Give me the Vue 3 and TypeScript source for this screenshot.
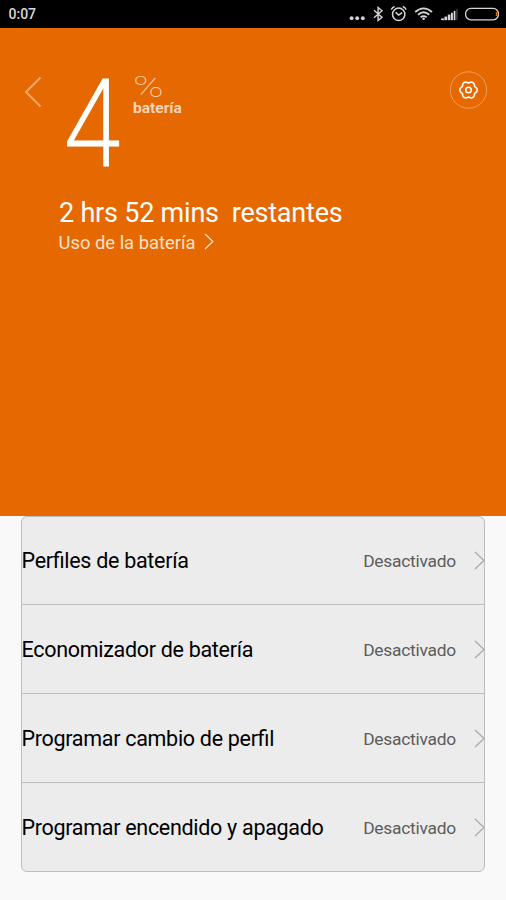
<script setup lang="ts">
interface Setting {
  label: string
  value: string
}

const settings: Setting[] = [
  { label: 'Perfiles de batería', value: 'Desactivado' },
  { label: 'Economizador de batería', value: 'Desactivado' },
  { label: 'Programar cambio de perfil', value: 'Desactivado' },
  { label: 'Programar encendido y apagado', value: 'Desactivado' },
]

// Outline of the six-lobed settings gear, centred on the origin.
const gearPoints: string = Array.from({ length: 72 }, (_, i) => {
  const a = (i * Math.PI) / 36
  const r = 8 + 0.75 * Math.cos(6 * a) - 0.15 * Math.cos(12 * a)
  return `${(r * Math.cos(a)).toFixed(2)},${(r * Math.sin(a)).toFixed(2)}`
}).join(' ')
</script>

<template>
  <div class="screen">
    <header class="status">
      <span class="clock">0:07</span>
      <svg class="status-icons" width="166" height="28" viewBox="340 0 166 28" fill="none" stroke="#d6d6d6">
        <g fill="#d6d6d6" stroke="none">
          <circle cx="351.6" cy="18.2" r="1.9" />
          <circle cx="357.2" cy="18.2" r="1.9" />
          <circle cx="362.8" cy="18.2" r="1.9" />
        </g>
        <path d="M374 10.2 L382 17.3 L378.1 20.6 V7.4 L382 10.7 L374 17.8" stroke-width="1.4" />
        <circle cx="398.7" cy="14.3" r="6.2" stroke-width="1.5" />
        <path d="M395.6 12.4 L398.7 15.1 L402.1 12.6 M391.3 9.6 Q392.2 7.4 394.6 6.5 M406.1 9.6 Q405.2 7.4 402.8 6.5" stroke-width="1.5" />
        <g stroke-width="1.8">
          <path d="M415.2 12 Q423.6 4.8 432 12" />
          <path d="M418 14.7 Q423.6 9.9 429.2 14.7" />
          <path d="M420.6 17.2 Q423.6 14.9 426.6 17.2" />
        </g>
        <circle cx="423.6" cy="18.8" r="1.3" fill="#d6d6d6" stroke="none" />
        <g fill="#d6d6d6" stroke="none">
          <rect x="441.2" y="18.4" width="2.7" height="1.8" />
          <rect x="444.4" y="16.6" width="2.7" height="3.6" />
          <rect x="447.8" y="14.6" width="2.6" height="5.6" />
          <rect x="451" y="12.8" width="1.9" height="7.4" />
          <rect x="453.7" y="10.8" width="1.7" height="9.4" />
          <rect x="456.2" y="9" width="1.4" height="11" fill="#444" />
        </g>
        <rect x="465.6" y="8.4" width="32.8" height="11.4" rx="5.2" stroke-width="1.3" />
        <rect x="495.8" y="12" width="1.3" height="4" fill="#e66800" stroke="none" />
      </svg>
    </header>

    <section class="hero">
      <div class="hero-top">
        <svg class="back" width="18" height="32" viewBox="0 0 18 32" fill="none">
          <path d="M16.5 1.5 L2 16 L16.5 30.5" stroke="#f2a46b" stroke-width="2" />
        </svg>
        <span class="level">4</span>
        <div class="unit">
          <span class="percent">%</span>
          <span class="unit-label">batería</span>
        </div>
        <svg class="gear" width="38" height="38" viewBox="-18.5 -19 38 38" fill="none">
          <circle r="18.2" stroke="#f3aa74" stroke-width="0.8" />
          <polygon :points="gearPoints" stroke="#fff" stroke-width="1.6" stroke-linejoin="round" />
          <circle r="2.8" stroke="#fff" stroke-width="1.5" />
        </svg>
      </div>
      <p class="remaining">2 hrs 52 mins&nbsp; restantes</p>
      <p class="usage">
        <span>Uso de la batería</span>
        <svg width="10" height="17" viewBox="0 0 10 17" fill="none">
          <path d="M1 1 L8.8 8.5 L1 16" stroke="#fbe0cc" stroke-width="1.3" />
        </svg>
      </p>
    </section>

    <main class="card">
      <div v-for="item in settings" :key="item.label" class="row">
        <span class="label">{{ item.label }}</span>
        <span class="value">{{ item.value }}</span>
        <svg class="chevron" width="11" height="19" viewBox="0 0 11 19" fill="none">
          <path d="M1 1 L10 9.5 L1 18" stroke="#a8a8a8" stroke-width="1.2" />
        </svg>
      </div>
    </main>
  </div>
</template>

<style>
body {
  background: #f9f9f9;
}
</style>

<style scoped>
.screen {
  width: 506px;
  height: 900px;
  overflow: hidden;
  background: #f9f9f9;
  font-family: Roboto, sans-serif;
}
.status {
  display: flex;
  justify-content: space-between;
  height: 28px;
  background: #000;
}
.clock {
  padding-left: 8.5px;
  color: #d8d8d8;
  font-size: 14px;
  font-weight: 500;
  line-height: 29px;
}
.hero {
  box-sizing: border-box;
  height: 487.5px;
  padding-top: 43px;
  background: #e66800;
  color: #fff;
}
.hero-top {
  display: flex;
  align-items: flex-start;
  height: 126px;
  padding: 0 18px 0 24px;
}
.back {
  margin-top: 5px;
}
.level {
  width: 73px;
  margin-left: 18px;
  font-family: Inter, sans-serif;
  font-size: 120px;
  font-weight: 200;
  line-height: 104px;
  transform: scaleX(0.9);
  transform-origin: left;
  -webkit-text-stroke: 0.8px #fff;
}
.unit {
  display: flex;
  flex-direction: column;
}
.percent {
  color: #f9d0b0;
  font-size: 30px;
  font-weight: 250;
  line-height: 31px;
  transform: scaleX(1.37);
  transform-origin: left;
}
.unit-label {
  margin-top: -3px;
  color: #f9d5b9;
  font-size: 15.5px;
  font-weight: 700;
  line-height: 18px;
}
.gear {
  margin-left: auto;
}
.remaining {
  margin: 0 0 0 59px;
  font-size: 27px;
  letter-spacing: -0.22px;
  line-height: 32px;
}
.usage {
  display: flex;
  align-items: center;
  gap: 8px;
  margin: 0 0 0 58.5px;
  color: #fbe0cc;
  font-size: 18.4px;
  line-height: 28px;
}
.usage svg {
  margin-top: -3px;
}
.card {
  box-sizing: border-box;
  width: 464px;
  margin: 0.5px 0 0 21px;
  border: 1px solid #bdbdbd;
  border-radius: 6px;
  background: #ececec;
}
.row {
  box-sizing: border-box;
  display: flex;
  align-items: center;
  height: 89px;
  border-bottom: 1px solid #bdbdbd;
}
.row:first-child {
  height: 88px;
}
.row:last-child {
  height: 88px;
  border-bottom: 0;
}
.label {
  flex: 1;
  margin-left: -0.5px;
  color: #000;
  font-size: 21.5px;
  font-feature-settings: 'liga' 1;
  letter-spacing: -0.3px;
}
.row:not(:first-child) .label {
  padding-top: 1px;
}
.value {
  padding-top: 1px;
  color: #5c5c5c;
  font-size: 17.4px;
  letter-spacing: -0.25px;
}
.chevron {
  margin: 0 -1px 0 18px;
}
</style>
